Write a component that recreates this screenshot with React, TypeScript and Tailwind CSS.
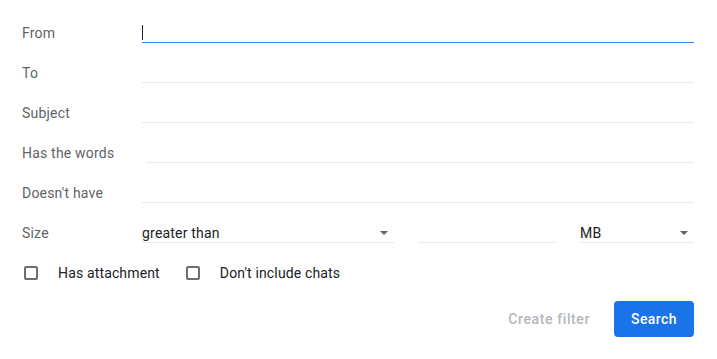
import { ReactNode } from "react";

function Row({ label, children }: { label: string; children: ReactNode }) {
  return (
    <div className="flex h-10 items-center">
      <div className="w-[120px] shrink-0 pt-[1px] text-[14px] tracking-[0.2px] text-[#5f6368]">{label}</div>
      <div className="flex flex-1 items-center">{children}</div>
    </div>
  );
}

function TextInput({ focused = false, className = "" }: { focused?: boolean; className?: string }) {
  return (
    <div
      className={`relative h-5 flex-1 border-b ${
        focused ? "border-[#4285f4]" : "border-[#e8eaed]"
      } ${className}`}
    >
      {focused && <span className="absolute left-0 top-[2px] h-[15px] w-px bg-[#202124]" />}
    </div>
  );
}

function Select({ value, className = "" }: { value: string; className?: string }) {
  return (
    <div
      className={`flex h-5 items-center justify-between border-b border-[#e8eaed] pt-[1px] text-[14px] tracking-[0.2px] text-[#202124] ${className}`}
    >
      <span>{value}</span>
      <svg width="8" height="4" viewBox="0 0 8 4" className="mr-[6px]">
        <path d="M0 0h8L4 4z" fill="#5f6368" />
      </svg>
    </div>
  );
}

function Checkbox({ label }: { label: string }) {
  return (
    <label className="flex items-center">
      <span className="mx-[2px] h-[14px] w-[14px] rounded-[2px] border-2 border-[#6b6e72]" />
      <span className="ml-[18px] pt-[1px] text-[14px] tracking-[0.15px] text-[#202124]">{label}</span>
    </label>
  );
}

export default function App() {
  return (
    <div
      className="h-[359px] w-[717px] bg-white pl-[22px] pr-[23px] pt-[13px]"
      style={{ fontFamily: "Roboto, 'Liberation Sans', sans-serif" }}
    >
      <Row label="From">
        <TextInput focused />
      </Row>
      <Row label="To">
        <TextInput />
      </Row>
      <Row label="Subject">
        <TextInput />
      </Row>
      <Row label="Has the words">
        <TextInput className="ml-1" />
      </Row>
      <Row label="Doesn't have">
        <TextInput />
      </Row>
      <Row label="Size">
        <Select value="greater than" className="w-[252px]" />
        <div className="ml-6 h-5 w-[138px] border-b border-[#e8eaed]" />
        <Select value="MB" className="ml-6 flex-1" />
      </Row>
      <div className="flex h-10 items-center">
        <Checkbox label="Has attachment" />
        <div className="ml-[24px]">
          <Checkbox label="Don't include chats" />
        </div>
      </div>
      <div className="mt-2 flex items-center justify-end">
        <button className="mr-6 text-[14px] font-medium tracking-[0.6px] text-[#b4b7bb]">Create filter</button>
        <button className="h-9 w-20 rounded-[4px] bg-[#1a73e8] text-[14px] font-medium tracking-[0.4px] text-white">
          Search
        </button>
      </div>
    </div>
  );
}
